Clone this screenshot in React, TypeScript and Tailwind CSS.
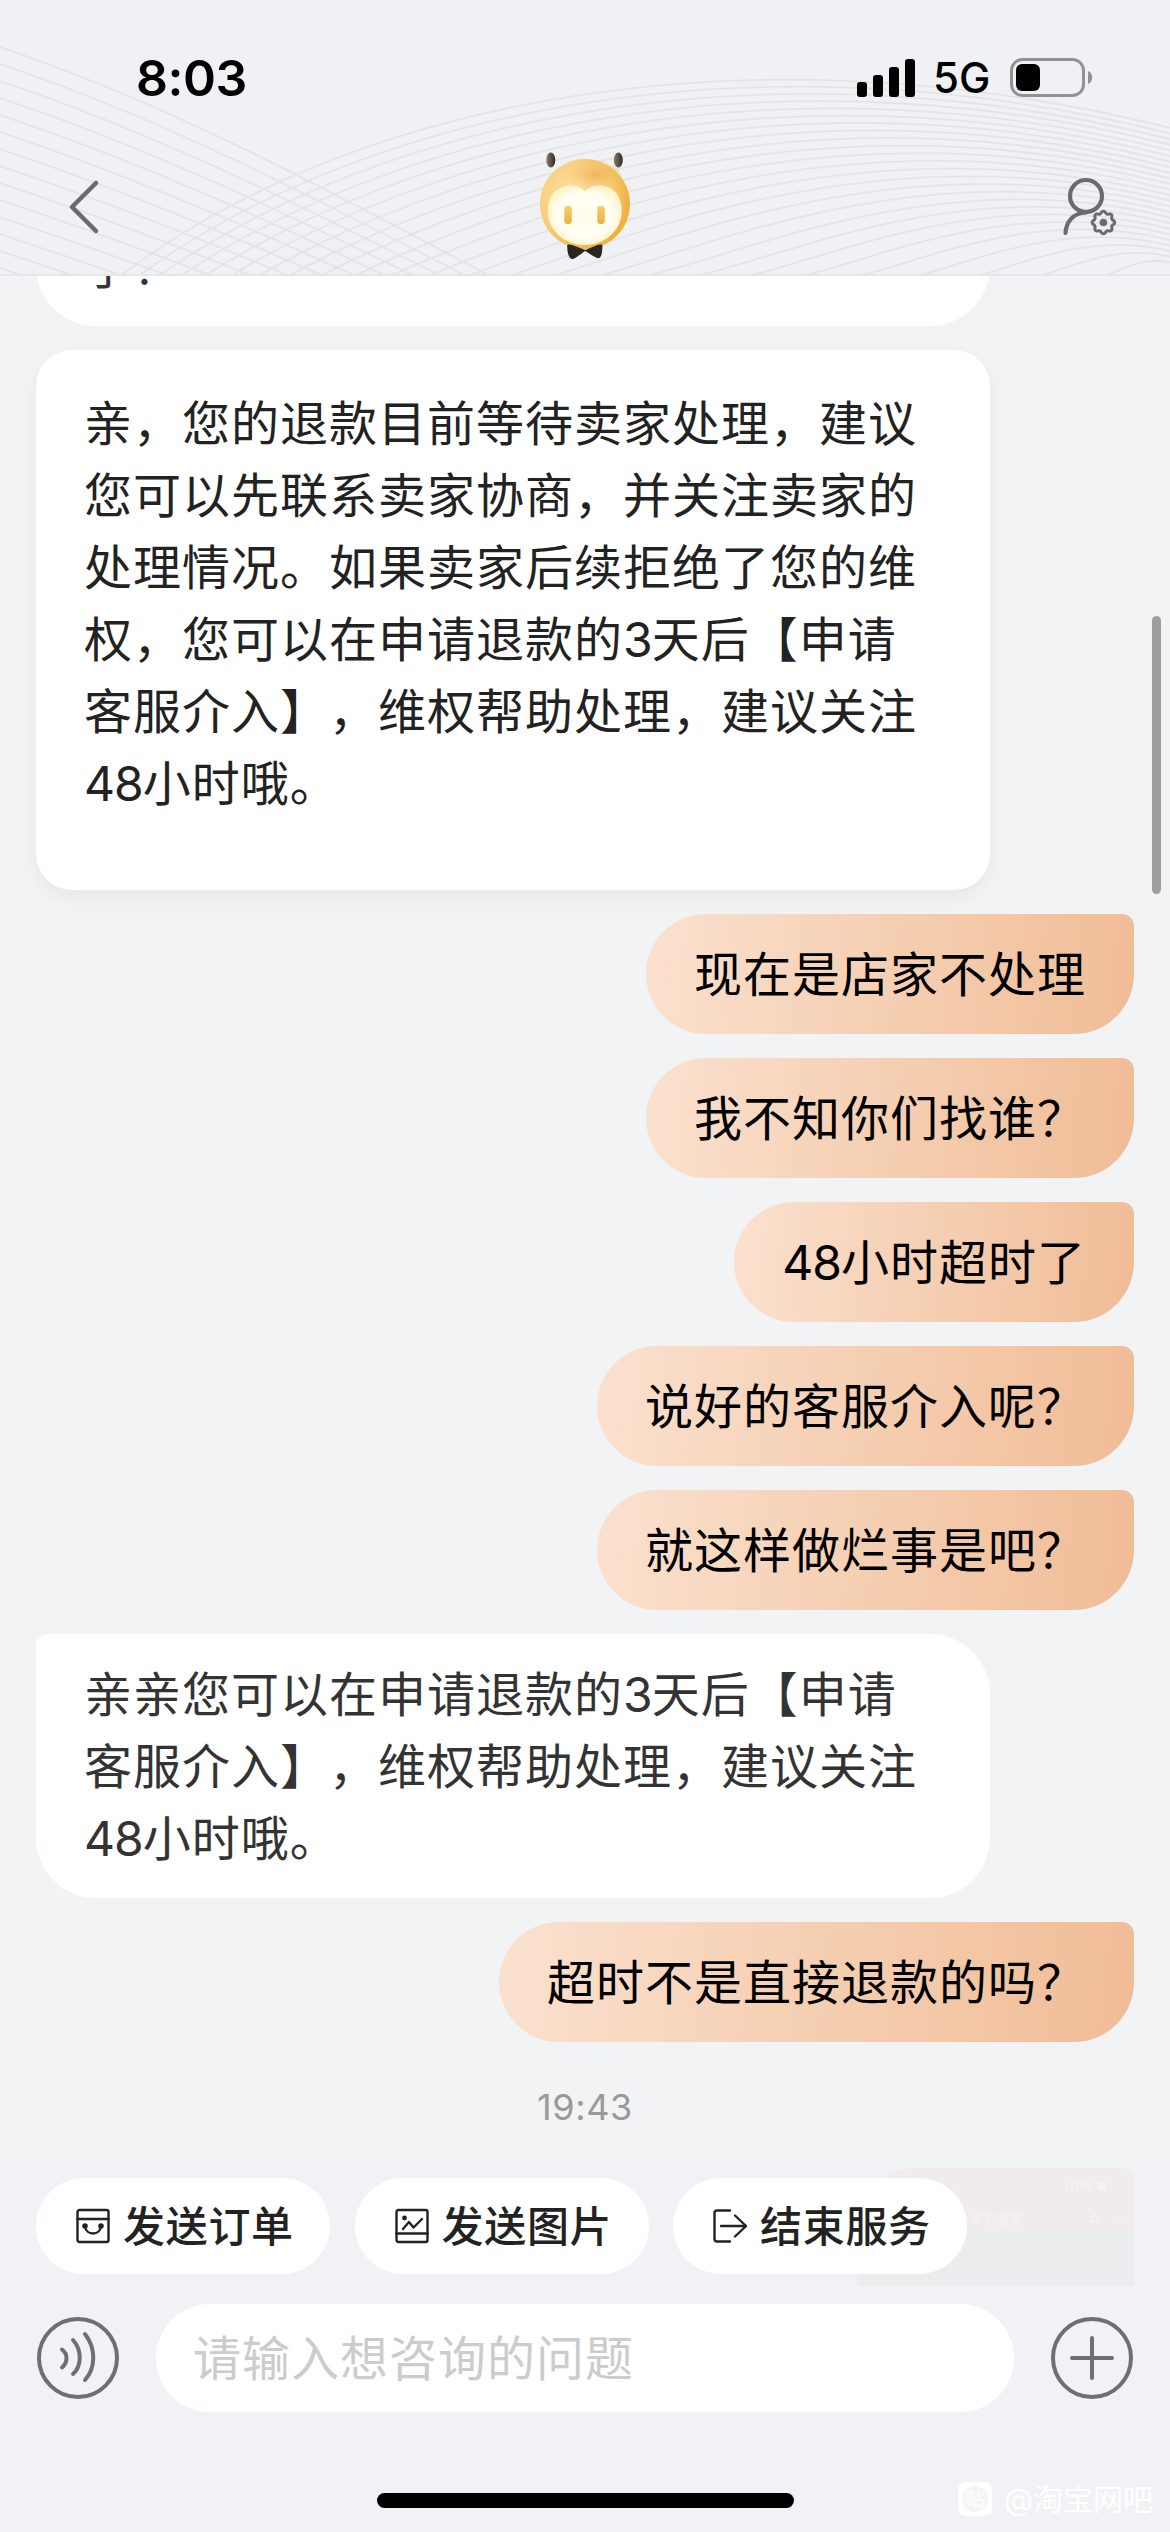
import clsx from "clsx";
import type { ReactNode } from "react";

type Message = {
  id: number;
  from: "bot" | "me";
  lines: string[];
  card?: boolean;
};

const messages: Message[] = [
  { id: 1, from: "bot", lines: ["了？"] },
  {
    id: 2,
    from: "bot",
    card: true,
    lines: [
      "亲，您的退款目前等待卖家处理，建议",
      "您可以先联系卖家协商，并关注卖家的",
      "处理情况。如果卖家后续拒绝了您的维",
      "权，您可以在申请退款的3天后【申请",
      "客服介入】，维权帮助处理，建议关注",
      "48小时哦。",
    ],
  },
  { id: 3, from: "me", lines: ["现在是店家不处理"] },
  { id: 4, from: "me", lines: ["我不知你们找谁？"] },
  { id: 5, from: "me", lines: ["48小时超时了"] },
  { id: 6, from: "me", lines: ["说好的客服介入呢？"] },
  { id: 7, from: "me", lines: ["就这样做烂事是吧？"] },
  {
    id: 8,
    from: "bot",
    lines: [
      "亲亲您可以在申请退款的3天后【申请",
      "客服介入】，维权帮助处理，建议关注",
      "48小时哦。",
    ],
  },
  { id: 9, from: "me", lines: ["超时不是直接退款的吗？"] },
];

const HeaderWaves = () => {
  const falling = Array.from({ length: 14 }, (_, i) => {
    const y = 47 + i * 17;
    return `M0 ${y} C150 ${y + 50} 290 ${y + 122 - i * 2} 520 ${y + 245 - i * 5}`;
  });
  const rising = Array.from({ length: 25 }, (_, i) => {
    const x = 122 + i * 17 + i * i;
    const end = 128 + i * 5.6;
    const s = (1170 - x) / 1048;
    const lift = 160 * s * Math.max(0.3, 1 - i * 0.043);
    return `M${x} 275 C${x + 208 * s} ${275 - lift} ${1170 - 450 * s} ${end - 113 * s} 1170 ${end}`;
  });

  return (
    <svg
      className="absolute inset-0"
      width="1170"
      height="276"
      viewBox="0 0 1170 276"
      fill="none"
      stroke="#e5e4e5"
      strokeWidth="1.8"
    >
      {[...falling, ...rising].map((d) => (
        <path key={d} d={d} />
      ))}
    </svg>
  );
};

const StatusBar = () => (
  <div className="relative flex h-[156px] items-center justify-between pl-[136px] pr-[77px]">
    <p className="text-[50px] leading-none font-semibold tracking-[-0.5px] text-black">
      8:03
    </p>
    <div className="flex items-center">
      <svg width="58" height="38" viewBox="0 0 58 38" fill="#000">
        <rect x="0" y="23" width="10" height="15" rx="3" />
        <rect x="16" y="16" width="10" height="22" rx="3" />
        <rect x="32" y="8" width="10" height="30" rx="3" />
        <rect x="48" y="0" width="10" height="38" rx="3" />
      </svg>
      <p className="ml-[18px] w-[58px] text-[42px] leading-none font-medium text-black">
        5G
      </p>
      <svg className="ml-[19px]" width="83" height="40" viewBox="0 0 83 40">
        <rect
          x="1.5"
          y="1.5"
          width="72"
          height="36"
          rx="11"
          fill="none"
          stroke="#919295"
          strokeWidth="3"
        />
        <rect x="6" y="6" width="24" height="27" rx="6" fill="#000" />
        <path d="M78 13 C83.5 15 83.5 24 78 26 Z" fill="#919295" />
      </svg>
    </div>
  </div>
);

const Avatar = () => (
  <svg width="100" height="110" viewBox="534.7 150 100 110">
    <defs>
      <radialGradient id="head" cx="0.38" cy="0.42" r="0.62">
        <stop offset="0" stopColor="#fbe3b0" />
        <stop offset="0.65" stopColor="#f8cf7c" />
        <stop offset="1" stopColor="#f0b03c" />
      </radialGradient>
      <radialGradient id="face" cx="0.5" cy="0.5" r="0.6">
        <stop offset="0" stopColor="#fffdea" />
        <stop offset="0.6" stopColor="#fffef4" />
        <stop offset="1" stopColor="#fdf0b8" />
      </radialGradient>
      <radialGradient id="shine" cx="0.6" cy="0.4" r="0.5">
        <stop offset="0" stopColor="#efac50" stopOpacity="0.75" />
        <stop offset="1" stopColor="#f5c76b" stopOpacity="0" />
      </radialGradient>
      <linearGradient id="eye" x1="0" y1="0" x2="0" y2="1">
        <stop offset="0" stopColor="#f6cd72" />
        <stop offset="1" stopColor="#ecaf3d" />
      </linearGradient>
      <linearGradient id="ear" x1="0" y1="0" x2="1" y2="0">
        <stop offset="0" stopColor="#8d7a6b" />
        <stop offset="1" stopColor="#2f2722" />
      </linearGradient>
    </defs>
    <ellipse cx="550.5" cy="160" rx="4.5" ry="7.5" fill="url(#ear)" />
    <ellipse cx="618" cy="160" rx="4.5" ry="7.5" fill="url(#ear)" />
    <circle cx="584.7" cy="204" r="45" fill="url(#head)" />
    <ellipse cx="590" cy="178" rx="32" ry="18" fill="url(#shine)" />
    <path
      d="M584.7 191 C593 183 607 184 615 192 C624 202 623 219 616 229 C609 239 598 245 584.7 245 C571 245 560 239 553 229 C546 219 545 202 554 192 C562 184 576 183 584.7 191 Z"
      fill="url(#face)"
    />
    <rect x="564" y="206" width="7.5" height="18" rx="3" fill="url(#eye)" />
    <rect x="597" y="206" width="7.5" height="18" rx="3" fill="url(#eye)" />
    <path
      d="M567 247 C566 244 569 244 572 245 L585 250 L597 245 C601 244 603 244 602 248 C602 253 601 257 599 258 C596 259 590 254 585 251 C580 254 574 260 571 259 C568 257 567 252 567 247 Z"
      fill="#2a2622"
    />
  </svg>
);

// eight-lobed outline around (cx, cy)
const gearPath = (cx: number, cy: number, r: number) => {
  const steps = 96;
  const points = Array.from({ length: steps }, (_, i) => {
    const a = (i / steps) * Math.PI * 2;
    const radius = r + Math.cos(a * 8) * 1.1;
    return `${(cx + Math.cos(a) * radius).toFixed(2)} ${(cy + Math.sin(a) * radius).toFixed(2)}`;
  });
  return `M${points.join(" L")} Z`;
};

const Header = () => (
  <header className="relative h-[276px] shrink-0 border-b-2 border-[#e6e7ea] bg-[#eff1f5]">
    <HeaderWaves />
    <StatusBar />
    <div className="relative flex h-[102px] items-center justify-between pr-[52px] pl-[66px]">
      <svg
        width="36"
        height="56"
        viewBox="66 179 36 56"
        fill="none"
        stroke="#6a6b6e"
        strokeWidth="4.5"
        strokeLinecap="round"
        strokeLinejoin="round"
      >
        <path d="M96 183 L72 207 L96 231" />
      </svg>
      <div className="pb-1 pl-[5px]">
        <Avatar />
      </div>
      <svg
        width="56"
        height="60"
        viewBox="1062 177 56 60"
        fill="none"
        stroke="#6a6b6e"
        strokeLinecap="round"
        strokeWidth="4.2"
      >
        <circle cx="1086" cy="196" r="16" />
        <path d="M1065.5 233 C1066 222 1073 213 1086 212.500" />
        <path d={gearPath(1103.4, 222.5, 10.2)} strokeWidth="3" />
        <circle cx="1103.4" cy="222.5" r="3.8" fill="#6a6b6e" stroke="none" />
      </svg>
    </div>
  </header>
);

// digits sit tighter than the surrounding characters
const Line = ({ text }: { text: string }) => (
  <p>
    {text.split(/(\d+)/).map((part, i) =>
      i % 2 ? (
        <span key={i} className="tracking-[-1px]">
          {part}
        </span>
      ) : (
        part
      )
    )}
  </p>
);

const Bubble = ({ message }: { message: Message }) => (
  <div
    className={clsx(
      "text-[48px] leading-[72px] tracking-[1px] whitespace-pre",
      message.from === "me" &&
        "self-end rounded-[60px] rounded-tr-[12px] bg-[linear-gradient(96deg,#fae1cf,#f5cfb2_50%,#f0bc96)] px-12 pt-[25px] pb-[23px] text-black",
      message.from === "bot" && "w-[954px] self-start bg-white px-12",
      message.from === "bot" &&
        (message.card
          ? "rounded-[36px] pt-[38px] pb-[70px] text-[#222] shadow-[0_8px_20px_rgba(0,0,0,0.05)]"
          : "rounded-[60px] rounded-tl-[12px] pt-[25px] pb-[23px] text-[#333]")
    )}
  >
    {message.lines.map((line) => (
      <Line key={line} text={line} />
    ))}
  </div>
);

const ActionPill = ({ icon, label }: { icon: ReactNode; label: string }) => (
  <button className="flex h-24 w-[294px] items-center rounded-full bg-white pl-10 text-[#222]">
    <svg
      width="34"
      height="36"
      viewBox="0 0 34 36"
      fill="none"
      stroke="currentColor"
      strokeWidth="2.4"
      strokeLinecap="round"
      strokeLinejoin="round"
    >
      {icon}
    </svg>
    <span className="mt-[2px] ml-[13px] text-[42px] leading-none font-medium tracking-[0.7px]">
      {label}
    </span>
  </button>
);

// picture message that shows faintly under the quick actions
const PicturePreview = () => (
  <div className="absolute top-0 right-9 h-[118px] w-[277px] overflow-hidden rounded-tl-[60px] rounded-tr-[12px] bg-[#ebecee]">
    <div className="h-[64px] bg-[#f0ebec] pt-3 pr-3">
      <div className="flex items-end justify-end gap-[3px] pr-4">
        <span className="h-[4px] w-[2px] bg-[#f6f2f3]" />
        <span className="h-[7px] w-[2px] bg-[#f6f2f3]" />
        <span className="h-[10px] w-[2px] bg-[#f6f2f3]" />
        <span className="h-[8px] w-[10px] bg-[#f3eff0]" />
        <span className="ml-1 h-[8px] w-[8px] bg-[#f6f2f3]" />
      </div>
      <div className="mt-5 flex items-center pl-[114px] text-[13px] leading-none text-[#f6f2f3]">
        <span>官方客服</span>
        <span className="ml-auto text-[16px]">☆</span>
        <span className="ml-2">…</span>
      </div>
    </div>
  </div>
);

const RoundIcon = ({ children }: { children: ReactNode }) => (
  <svg
    width="84"
    height="84"
    viewBox="0 0 84 84"
    fill="none"
    stroke="#6e6f72"
    strokeWidth="4"
    strokeLinecap="round"
  >
    <circle cx="42" cy="42" r="39" />
    {children}
  </svg>
);

const Footer = () => (
  <footer className="relative flex h-[364px] shrink-0 flex-col bg-[#f1f2f5]">
    <PicturePreview />
    <div className="relative mt-[10px] flex gap-[24.5px] pl-9">
      <ActionPill
        label="发送订单"
        icon={
          <>
            <rect x="1.5" y="2" width="31" height="32" rx="2" />
            <path d="M1.5 11 H32.5" />
            <path d="M9 18 C10 28 24 28 25 18" />
            <circle cx="9" cy="18" r="1.6" fill="currentColor" />
            <circle cx="25" cy="18" r="1.6" fill="currentColor" />
          </>
        }
      />
      <ActionPill
        label="发送图片"
        icon={
          <>
            <rect x="1.5" y="2" width="31" height="32" rx="2" />
            <circle cx="9.5" cy="10" r="2.4" fill="currentColor" stroke="none" />
            <path d="M8 21 L14 14 L18.5 19.5 L27 11" />
            <path d="M1.5 25.5 H32.5" />
          </>
        }
      />
      <ActionPill
        label="结束服务"
        icon={
          <>
            <path d="M17 2.5 H4 Q1.5 2.5 1.5 5 V31 Q1.5 33.5 4 33.5 H17" />
            <path d="M8 18 H33" />
            <path d="M22 7.5 L33 18 L22 28.5" />
          </>
        }
      />
    </div>
    <div className="mt-[30px] flex items-center justify-between px-9">
      <RoundIcon>
        <path d="M26 33.5 C32 38 32 46 26 51.5" />
        <path d="M37 24 C46 34 46 50 37 58" />
        <path d="M49 18 C60 32 60 52 49 64" />
      </RoundIcon>
      <div className="flex h-[108px] w-[858px] items-center rounded-full bg-white pt-[2px] pl-[37px] text-[48px] leading-none tracking-[1px] text-[#ccc]">
        请输入想咨询的问题
      </div>
      <RoundIcon>
        <path d="M42 22 V62 M22 42 H62" />
      </RoundIcon>
    </div>
    <div className="mt-[81px] h-[15px] w-[417px] self-center rounded-full bg-black" />
    <div className="absolute right-[17px] bottom-[14px] flex items-center gap-[12px] text-white">
      <span className="flex size-[34px] items-center justify-center rounded-[8px] bg-white">
        <span className="flex size-[26px] items-center justify-center rounded-full bg-[#f4f5f7] text-[19px] leading-none text-white">
          贴
        </span>
      </span>
      <span className="text-[30px] leading-[38px]">@淘宝网吧</span>
    </div>
  </footer>
);

export default function App() {
  return (
    <div
      lang="zh-CN"
      className="flex h-[2532px] w-[1170px] flex-col overflow-hidden bg-[#f2f3f5] font-['Inter','Noto_Sans_CJK_SC',sans-serif] [text-spacing-trim:space-all]"
    >
      <Header />
      <main className="relative flex min-h-0 flex-1 flex-col overflow-hidden px-9">
        <div className="-mt-[70px] flex flex-col gap-6">
          {messages.map((message) => (
            <Bubble key={message.id} message={message} />
          ))}
        </div>
        <time className="mt-[47px] self-center text-[36px] leading-[36px] tracking-[0.6px] text-[#999]">
          19:43
        </time>
        <div className="absolute top-[340px] right-[9px] h-[278px] w-[9px] rounded-full bg-[#9e9e9e]" />
      </main>
      <Footer />
    </div>
  );
}
